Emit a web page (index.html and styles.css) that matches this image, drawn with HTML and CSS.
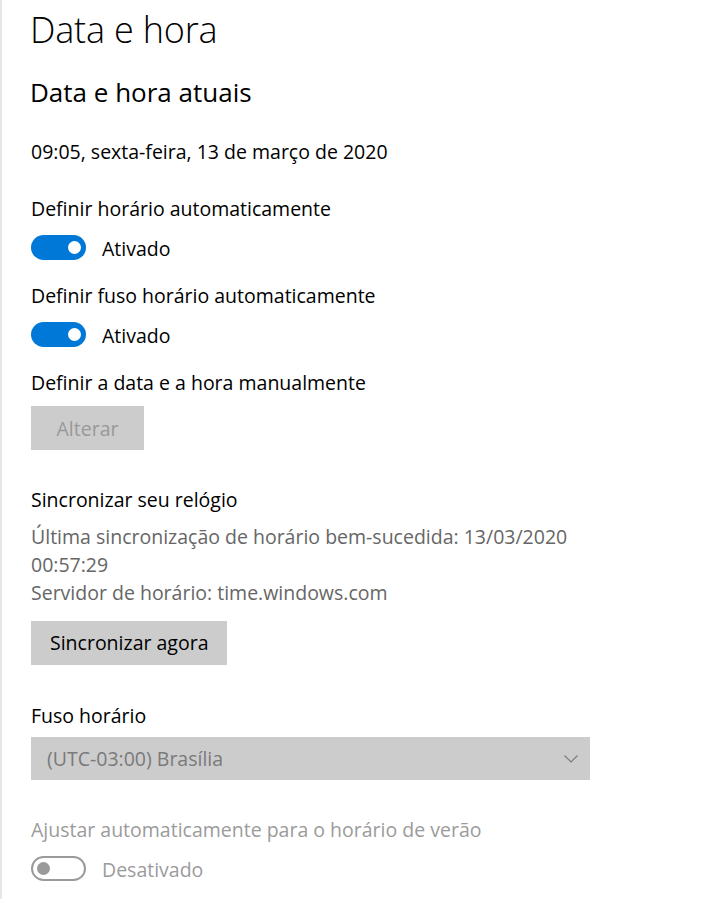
FILE: index.html
```html
<!DOCTYPE html>
<html lang="pt-BR">
<head>
<meta charset="utf-8">
<title>Data e hora</title>
<link rel="stylesheet" href="styles.css">
</head>
<body>
<main class="page">
  <h1 class="title">Data e hora</h1>
  <h2 class="subtitle">Data e hora atuais</h2>
  <p class="text date">09:05, sexta-feira, 13 de março de 2020</p>

  <p class="text label label-first">Definir horário automaticamente</p>
  <div class="toggle-row">
    <span class="toggle on"><span class="knob"></span></span>
    <span class="toggle-text">Ativado</span>
  </div>

  <p class="text label">Definir fuso horário automaticamente</p>
  <div class="toggle-row">
    <span class="toggle on"><span class="knob"></span></span>
    <span class="toggle-text">Ativado</span>
  </div>

  <p class="text label">Definir a data e a hora manualmente</p>
  <button class="btn btn-disabled" disabled>Alterar</button>

  <h3 class="text section">Sincronizar seu relógio</h3>
  <p class="text muted sync-info">Última sincronização de horário bem-sucedida: 13/03/2020<br>00:57:29</p>
  <p class="text muted server">Servidor de horário: time.windows.com</p>
  <button class="btn btn-sync">Sincronizar agora</button>

  <h3 class="text section tz-label">Fuso horário</h3>
  <div class="select disabled">
    <span class="select-text">(UTC-03:00) Brasília</span>
    <svg class="chevron" width="14" height="8" viewBox="0 0 14 8"><path d="M0.5 0.5 L7 7 L13.5 0.5" fill="none" stroke="#7a7a7a" stroke-width="1.1"/></svg>
  </div>

  <p class="text label dim dst-label">Ajustar automaticamente para o horário de verão</p>
  <div class="toggle-row">
    <span class="toggle off"><span class="knob"></span></span>
    <span class="toggle-text dim">Desativado</span>
  </div>
</main>
</body>
</html>
```

FILE: styles.css
```css
html, body {
  margin: 0;
  padding: 0;
  background: #ffffff;
}

body {
  font-family: "Open Sans", "Noto Sans", sans-serif;
  color: #000000;
}

.page {
  border-left: 2px solid #e6e6e6;
  min-height: 899px;
  box-sizing: border-box;
  padding: 8px 0 0 29px;
}

.title {
  margin: 0 0 0 -1px;
  font-size: 36px;
  font-weight: 300;
  line-height: 44px;
  letter-spacing: -0.2px;
}

.subtitle {
  margin: 24px 0 0 -1px;
  font-size: 26px;
  font-weight: 400;
  line-height: 32px;
  letter-spacing: 0;
}

.text {
  margin: 0;
  font-size: 19.5px;
  font-weight: 400;
  line-height: 26px;
  letter-spacing: 0;
}

.date {
  margin-top: 31px;
}

.label {
  margin-top: 23px;
}

.label-first {
  margin-top: 31px;
}

.toggle-row {
  display: flex;
  align-items: center;
  gap: 16px;
  margin-top: 13px;
  height: 25px;
}

.toggle {
  width: 55px;
  height: 25px;
  box-sizing: border-box;
  border-radius: 13px;
  display: flex;
  align-items: center;
  padding: 0 5.5px;
}

.toggle .knob {
  width: 13px;
  height: 13px;
  border-radius: 50%;
}

.toggle.on {
  background: #0078d7;
  justify-content: flex-end;
}

.toggle.on .knob {
  background: #ffffff;
}

.toggle.off {
  border: 2px solid #9a9a9a;
  justify-content: flex-start;
  padding: 0 4px;
}

.toggle.off .knob {
  background: #9a9a9a;
}

.toggle-text {
  font-size: 19.5px;
  line-height: 26px;
  padding-top: 2px;
}

.dim {
  color: #9b9b9b;
}

.muted {
  color: #666666;
}

.btn {
  display: block;
  font-family: "Open Sans", "Noto Sans", sans-serif;
  font-size: 19.5px;
  height: 44px;
  border: none;
  background: #cccccc;
  padding: 0 19px;
  margin: 0;
  color: #000000;
}

.btn-disabled {
  margin-top: 10px;
  min-width: 113px;
  color: #999999;
}

.section {
  margin-top: 37px;
}

.sync-info {
  margin-top: 10px;
  line-height: 28px;
}

.server {
  line-height: 28px;
}

.btn-sync {
  margin-top: 13.5px;
}

.tz-label {
  margin-top: 38px;
}

.select {
  margin-top: 8.5px;
  width: 559px;
  height: 43px;
  box-sizing: border-box;
  background: #cccccc;
  display: flex;
  align-items: center;
  justify-content: space-between;
  padding: 0 12px 0 16px;
}

.select-text {
  font-size: 19.5px;
  color: #7a7a7a;
}

.chevron {
  display: block;
}

.dst-label {
  margin-top: 37px;
}
```
